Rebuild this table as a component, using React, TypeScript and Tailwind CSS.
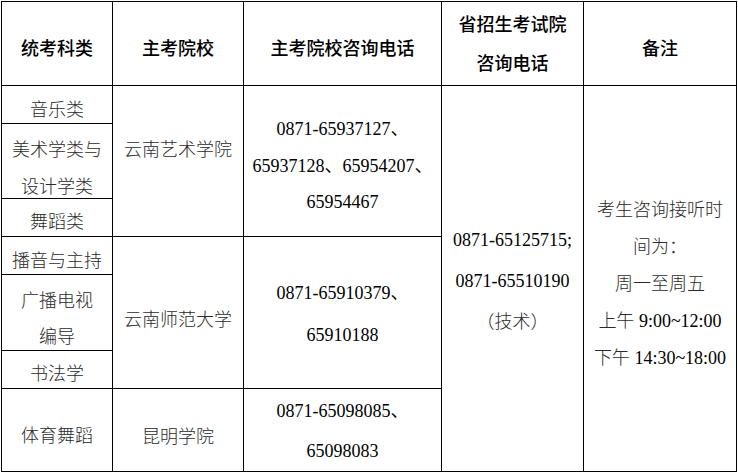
import React from "react";

const font = "font-['Liberation_Serif','Noto_Sans_CJK_SC',serif]";

function Cell({ className = "", children }: { className?: string; children: React.ReactNode }) {
  return (
    <div className={`bg-white flex flex-col items-center justify-center text-center whitespace-nowrap ${className}`}>
      {children}
    </div>
  );
}

export default function App() {
  const zh = "text-[#2a2a2a] font-light";
  const hd = "font-medium";
  return (
    <div className={`w-[738px] h-[473px] bg-white ${font} text-[18px] text-black`}>
      <div className="ml-px mt-px w-[736px] grid grid-cols-[110px_130px_197px_141px_152px] grid-rows-[83px_37px_74px_37px_37px_75px_37px_82px] gap-px p-px bg-black">
        {/* header */}
        <Cell className={`pt-[10px] leading-[24px] ${hd}`}>统考科类</Cell>
        <Cell className={`pt-[10px] leading-[24px] ${hd}`}>主考院校</Cell>
        <Cell className={`pt-[10px] leading-[24px] ${hd}`}>主考院校咨询电话</Cell>
        <Cell className={`pt-[2px] leading-[39px] ${hd}`}>
          <span>省招生考试院</span>
          <span>咨询电话</span>
        </Cell>
        <Cell className={`pt-[10px] leading-[24px] ${hd}`}>备注</Cell>

        {/* col 1 */}
        <Cell className={`col-start-1 row-start-2 pt-[10px] leading-[24px] ${zh}`}>音乐类</Cell>
        <Cell className={`col-start-1 row-start-3 pt-[15px] leading-[37px] ${zh}`}>
          <span>美术学类与</span>
          <span>设计学类</span>
        </Cell>
        <Cell className={`col-start-1 row-start-4 pt-[9px] leading-[24px] ${zh}`}>舞蹈类</Cell>
        <Cell className={`col-start-1 row-start-5 pt-[10px] leading-[24px] ${zh}`}>播音与主持</Cell>
        <Cell className={`col-start-1 row-start-6 pt-[12px] leading-[36px] ${zh}`}>
          <span>广播电视</span>
          <span>编导</span>
        </Cell>
        <Cell className={`col-start-1 row-start-7 pt-[9px] leading-[24px] ${zh}`}>书法学</Cell>
        <Cell className={`col-start-1 row-start-8 pt-[11px] leading-[24px] ${zh}`}>体育舞蹈</Cell>

        {/* col 2 */}
        <Cell className={`col-start-2 row-start-2 row-span-3 pb-[23px] leading-[24px] ${zh}`}>云南艺术学院</Cell>
        <Cell className={`col-start-2 row-start-5 row-span-3 pt-[15px] leading-[24px] ${zh}`}>云南师范大学</Cell>
        <Cell className={`col-start-2 row-start-8 pt-[14px] leading-[24px] ${zh}`}>昆明学院</Cell>

        {/* col 3 */}
        <Cell className="col-start-3 row-start-2 row-span-3 pt-[10px] leading-[36.5px]">
          <span>0871-65937127、</span>
          <span>65937128、65954207、</span>
          <span>65954467</span>
        </Cell>
        <Cell className="col-start-3 row-start-5 row-span-3 pt-[2px] leading-[42px]">
          <span>0871-65910379、</span>
          <span>65910188</span>
        </Cell>
        <Cell className="col-start-3 row-start-8 pt-[2px] leading-[40px]">
          <span>0871-65098085、</span>
          <span>65098083</span>
        </Cell>

        {/* col 4 */}
        <Cell className="col-start-4 row-start-2 row-span-7 pt-[5px] leading-[41px]">
          <span>0871-65125715;</span>
          <span>0871-65510190</span>
          <span className={zh}>（技术）</span>
        </Cell>

        {/* col 5 */}
        <Cell className="col-start-5 row-start-2 row-span-7 pt-[11px] leading-[37px]">
          <span className={zh}>考生咨询接听时</span>
          <span className={zh}>间为：</span>
          <span className={zh}>周一至周五</span>
          <span>
            <span className={zh}>上午</span> 9:00~12:00
          </span>
          <span>
            <span className={zh}>下午</span> 14:30~18:00
          </span>
        </Cell>
      </div>
    </div>
  );
}
